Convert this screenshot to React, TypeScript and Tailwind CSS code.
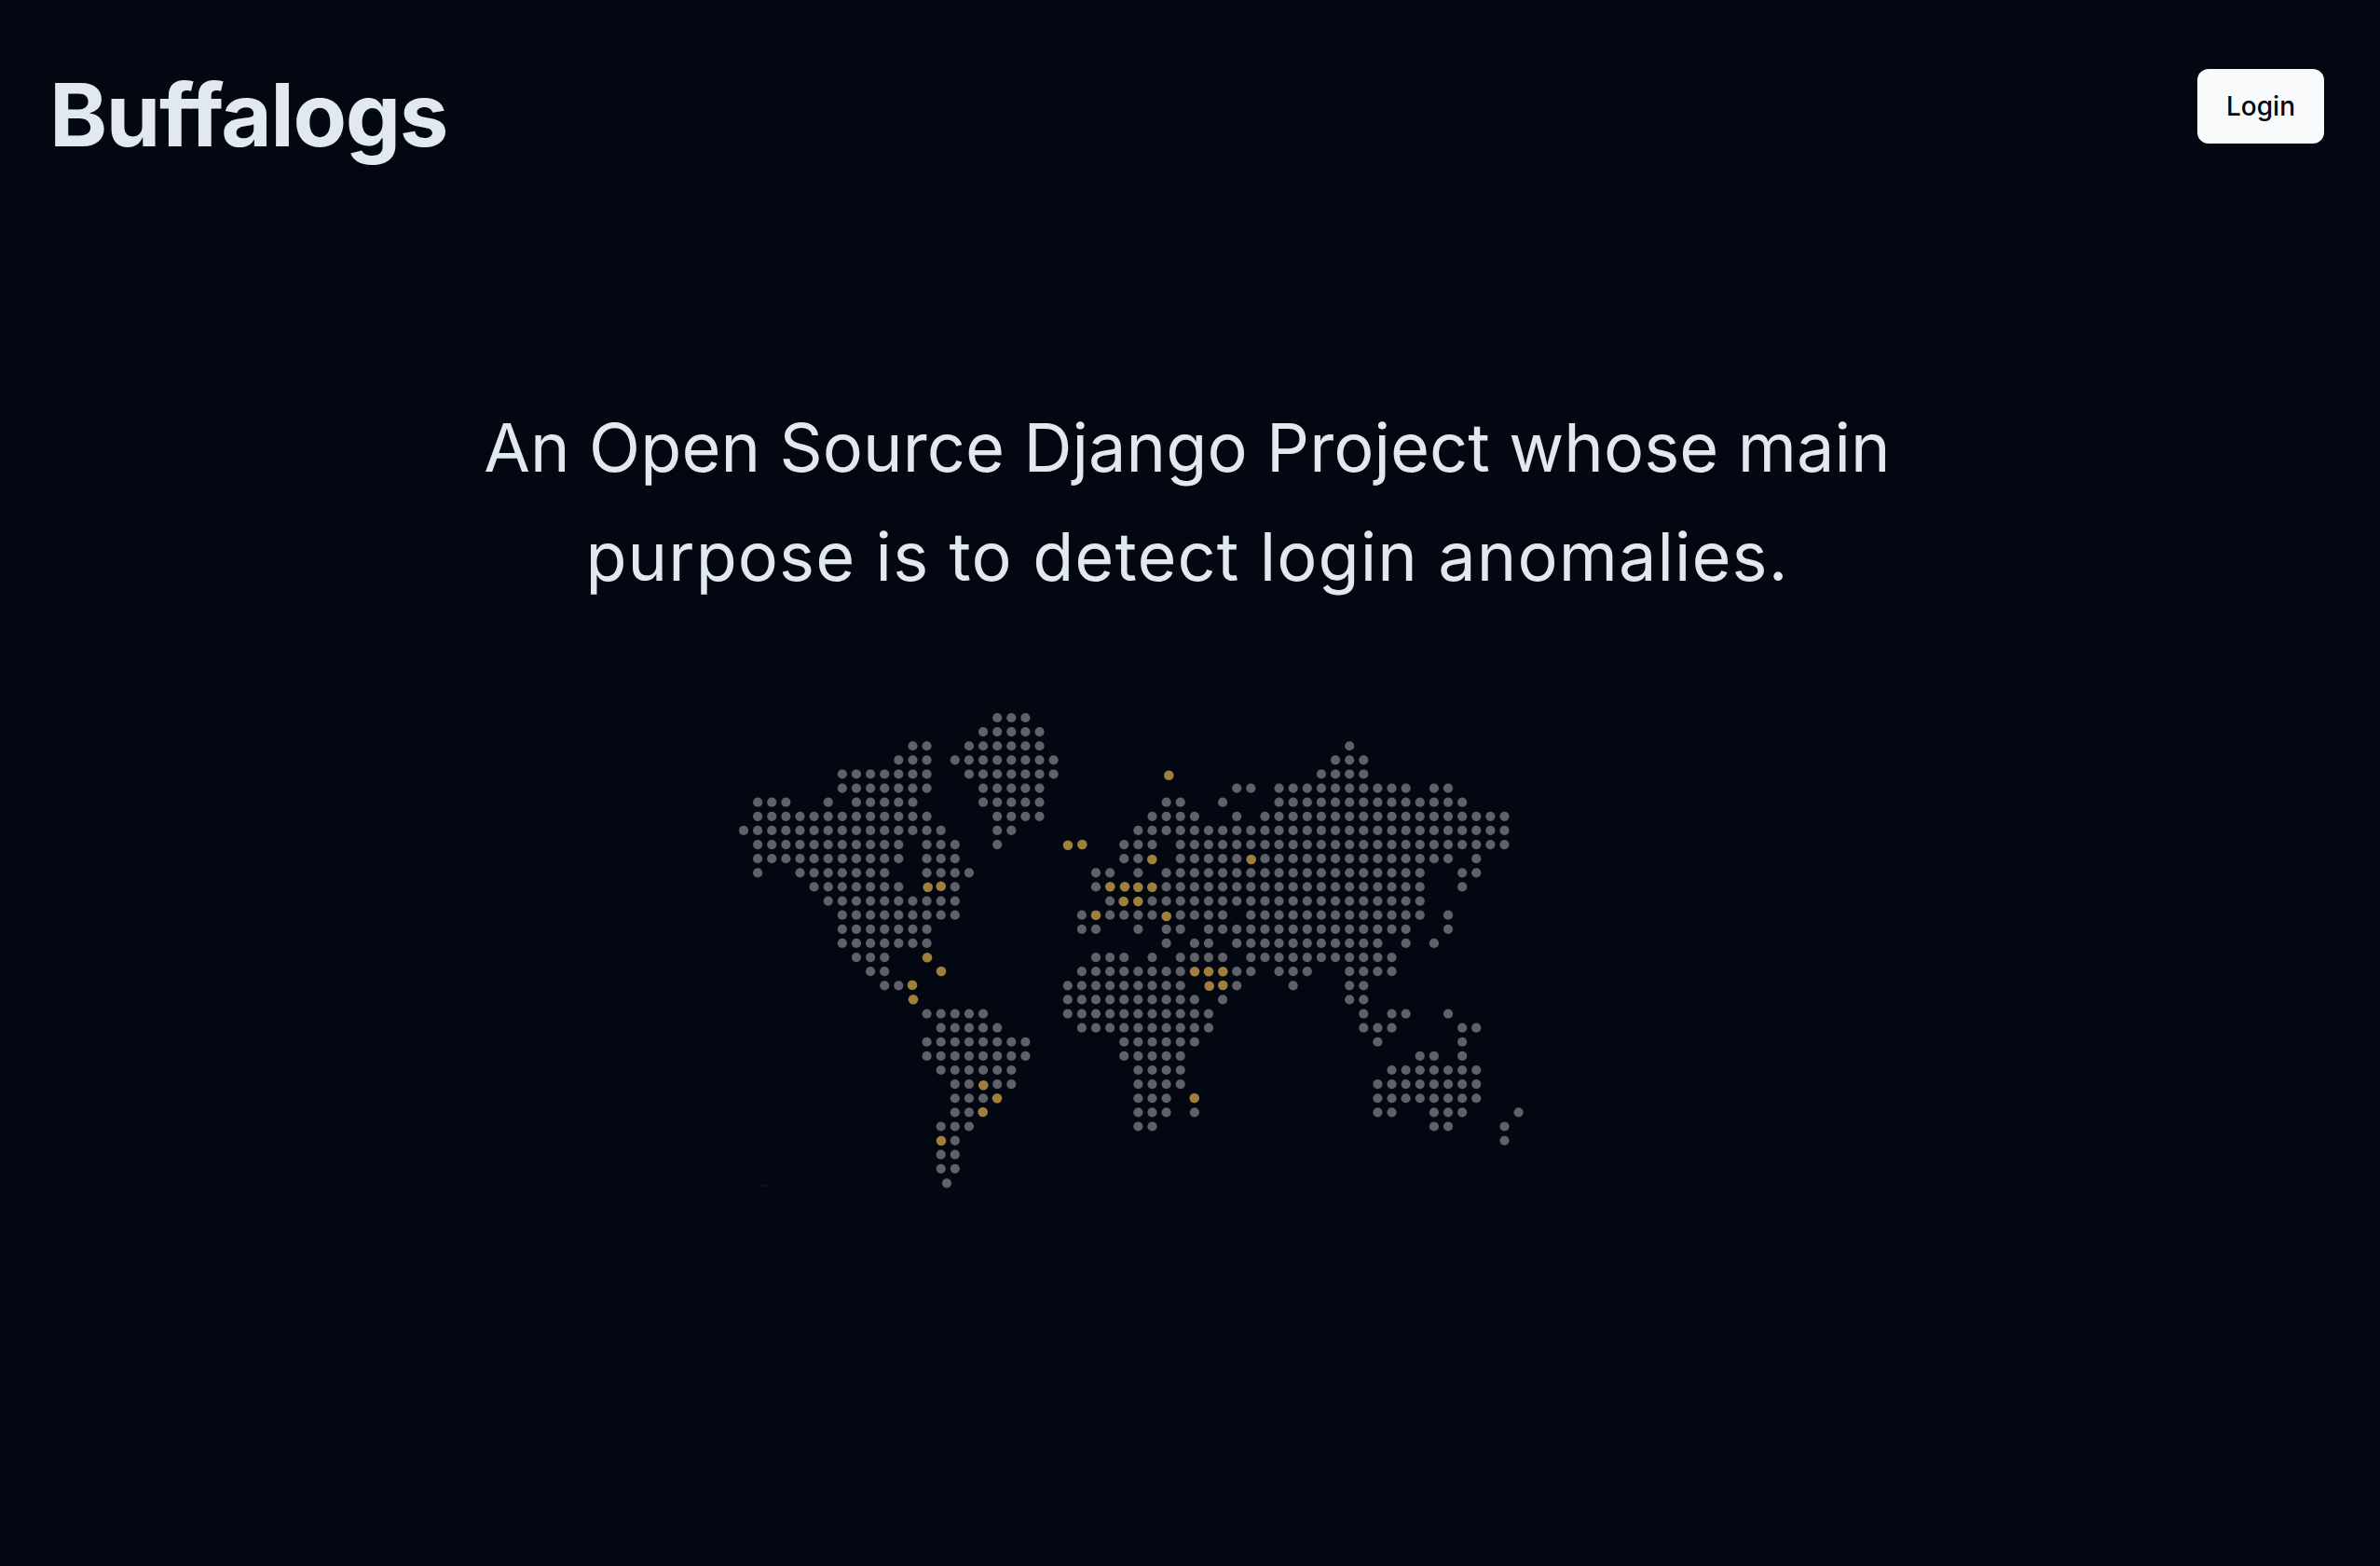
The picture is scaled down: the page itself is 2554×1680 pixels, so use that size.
import React from "react";

const P = 15.12;
const X0 = 798;
const Y0 = 770;

// Each row of the dot map: inclusive [from, to] column ranges
const rows: number[][][] = [
  [[18, 20]],
  [[17, 21]],
  [[12, 13], [16, 21], [43, 43]],
  [[11, 13], [15, 22], [42, 44]],
  [[7, 13], [16, 22], [41, 44]],
  [[7, 13], [17, 21], [35, 36], [38, 47], [49, 50]],
  [[1, 3], [6, 6], [8, 12], [17, 21], [30, 31], [34, 34], [38, 51]],
  [[1, 13], [18, 21], [29, 32], [35, 35], [37, 54]],
  [[0, 14], [18, 19], [28, 54]],
  [[1, 11], [13, 15], [18, 18], [27, 29], [31, 54]],
  [[1, 11], [13, 15], [27, 28], [31, 35], [37, 50], [52, 52]],
  [[1, 1], [4, 10], [13, 16], [25, 26], [28, 28], [30, 48], [51, 52]],
  [[5, 11], [15, 15], [25, 25], [30, 48], [51, 51]],
  [[6, 15], [26, 26], [29, 48]],
  [[7, 15], [24, 24], [26, 29], [31, 34], [36, 48], [50, 50]],
  [[7, 13], [24, 25], [28, 28], [30, 31], [33, 47], [50, 50]],
  [[7, 13], [30, 30], [32, 33], [35, 45], [47, 47], [49, 49]],
  [[8, 10], [25, 27], [29, 29], [31, 34], [36, 46]],
  [[9, 10], [24, 31], [35, 36], [38, 40], [43, 46]],
  [[10, 11], [23, 31], [35, 35], [39, 39], [43, 44]],
  [[23, 32], [34, 34], [43, 44]],
  [[13, 17], [23, 33], [44, 44], [46, 47], [50, 50]],
  [[14, 18], [24, 33], [44, 46], [51, 52]],
  [[13, 20], [27, 32], [45, 45], [51, 51]],
  [[13, 20], [27, 31], [48, 49], [51, 51]],
  [[14, 19], [28, 31], [46, 52]],
  [[15, 16], [18, 19], [28, 31], [45, 52]],
  [[15, 17], [28, 30], [45, 52]],
  [[15, 16], [28, 30], [32, 32], [45, 46], [49, 51], [55, 55]],
  [[14, 16], [28, 29], [49, 50], [54, 54]],
  [[15, 15], [54, 54]],
  [[14, 15]],
  [[14, 15]],
];

const grayDots: [number, number][] = [[1016, 1269.3]];
rows.forEach((ranges, r) =>
  ranges.forEach(([a, b]) => {
    for (let c = a; c <= b; c++) grayDots.push([X0 + c * P, Y0 + r * P]);
  })
);

const amberDots: [number, number][] = [
  [1146, 906.7], [1161.3, 906], [995.7, 951.7], [1009.7, 950.7],
  [1191.3, 951.3], [1207, 951.3], [1221.3, 951.7], [1236.3, 951.7],
  [1205.7, 967], [1221.3, 967], [1176, 981.7], [995, 1027.3],
  [1254.3, 831.7], [1236.3, 922], [1342.7, 922], [1251.7, 983],
  [1010, 1042], [979, 1056.7], [980, 1072.3], [1055.3, 1164.3],
  [1070, 1178.3], [1054.7, 1193], [1010, 1223.7],
  [1282, 1042.3], [1297, 1042.3], [1312.3, 1042.3], [1297.7, 1057.7],
  [1312.3, 1057], [1281.7, 1178],
];

export default function App() {
  return (
    <div className="min-h-screen bg-[#030712] text-[#e2e8f0]">
      <header className="flex items-start justify-between pl-[53px] pr-[60px] pt-[74px]">
        <h1 className="mt-[2px] text-[94px] font-bold leading-none tracking-[-1.4px] font-['Inter',sans-serif]">
          Buffalogs
        </h1>
        <button className="h-20 w-[136px] rounded-xl bg-[#f8fafc] text-[28px] font-medium text-[#030712] font-['Inter',sans-serif]">
          Login
        </button>
      </header>
      <main className="flex flex-col items-center pt-[251px]">
        <h2 className="mr-[6px] text-center text-[72px] font-normal leading-[117px] font-['Inter',sans-serif]">
          <span className="block tracking-[0.1px]">An Open Source Django Project whose main</span>
          <span className="block tracking-[1.1px]">purpose is to detect login anomalies.</span>
        </h2>
        <svg viewBox="777 750 1000 540" className="mt-[95px] block h-[540px] w-[1000px]">
          <g fill="#5f6068">
            {grayDots.map(([x, y], i) => (
              <circle key={i} cx={x} cy={y} r={5.1} />
            ))}
          </g>
          <g fill="#a07f3d">
            {amberDots.map(([x, y], i) => (
              <circle key={i} cx={x} cy={y} r={5.3} />
            ))}
          </g>
          <rect x="818" y="1271.5" width="5" height="1" fill="#1c2028" />
        </svg>
      </main>
    </div>
  );
}
